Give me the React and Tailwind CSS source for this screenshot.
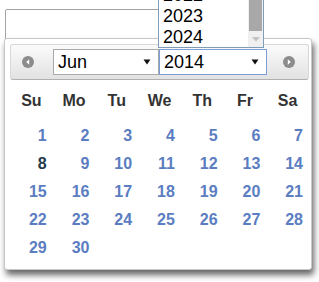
import React from 'react'

const DAYS = ['Su', 'Mo', 'Tu', 'We', 'Th', 'Fr', 'Sa']

// juin 2014 : commence un dimanche
const WEEKS = [
  [1, 2, 3, 4, 5, 6, 7],
  [8, 9, 10, 11, 12, 13, 14],
  [15, 16, 17, 18, 19, 20, 21],
  [22, 23, 24, 25, 26, 27, 28],
  [29, 30, null, null, null, null, null],
]

function Arrow() {
  return (
    <svg width="8" height="6" viewBox="0 0 8 6" className="block">
      <path d="M0.5 0.5 L7.5 0.5 L4 5.5 Z" fill="#111" />
    </svg>
  )
}

function NavIcon({ dir }) {
  return (
    <svg width="12" height="12" viewBox="0 0 12 12" className="block">
      <circle cx="6" cy="6" r="6" fill="#8c8c8c" />
      {dir === 'prev'
        ? <path d="M7.2 3.2 L4.2 6 L7.2 8.8 Z" fill="#fff" />
        : <path d="M4.8 3.2 L7.8 6 L4.8 8.8 Z" fill="#fff" />}
    </svg>
  )
}

function Select({ value, focused, className }) {
  return (
    <div className={`flex h-[26px] items-center justify-between bg-white pl-[4px] pr-[7px] text-[18px] text-black ${focused ? 'border border-[#7b9ed9]' : 'border border-[#a9a9a9]'} ${className}`}>
      <span className="leading-none">{value}</span>
      <Arrow />
    </div>
  )
}

export default function App() {
  return (
    <div className="relative h-[282px] w-[319px] overflow-hidden bg-white font-['Liberation_Sans',Arial,sans-serif]">
      <div className="pl-[5px] pt-[9px]">
        <div className="h-[31px] w-[200px] rounded-[2px] border border-[#a3a3a3] bg-white" />
      </div>

      {/* popup du calendrier */}
      <div className="absolute left-[4px] top-[38px] h-[232px] w-[308px] rounded-[3px] border border-[#c8c8c8] bg-white pl-[5px] pt-[5px] shadow-[2px_5px_6px_rgba(0,0,0,0.6)]">
        <div className="flex h-[36px] w-[299px] items-center rounded-[3px] border border-[#d8d8d8] border-b-[#b0b0b0] bg-gradient-to-b from-[#fbfbfb] to-[#e2e2e2]">
          <div className="ml-[11px] mr-[19px]"><NavIcon dir="prev" /></div>
          <Select value="Jun" className="w-[106px]" />
          <Select value="2014" focused className="w-[108px]" />
          <div className="ml-auto mr-[13px]"><NavIcon dir="next" /></div>
        </div>

        <div className="grid w-[299px] grid-cols-7">
          {DAYS.map((d) => (
            <div key={d} className="mt-[7px] flex h-[28px] items-center justify-center text-[16px] font-bold text-[#333]">{d}</div>
          ))}
        </div>
        <div className="mt-[7px] grid w-[299px] grid-cols-7">
          {WEEKS.flat().map((n, i) => (
            <div key={i} className={`flex h-[28px] items-center justify-end pr-[6px] text-[16px] font-bold ${n === 8 ? 'text-[#24394a]' : 'text-[#5b7dc1]'}`}>
              {n}
            </div>
          ))}
        </div>
      </div>

      {/* liste déroulante des années */}
      <div className="absolute left-[158px] top-[-16px] flex h-[64px] w-[106px] overflow-hidden border border-[#7f9db9] bg-white">
        <div className="flex-1 pl-[4px] pt-0 text-[18px] leading-[21px] text-black">
          <div>2022</div>
          <div>2023</div>
          <div>2024</div>
        </div>
        <div className="flex w-[15px] flex-col bg-[#f0f0f0]">
          <div className="mx-[1px] h-[46px] bg-[#a8a8a8]" />
          <div className="flex flex-1 items-start justify-center pt-[6px]">
            <svg width="8" height="5" viewBox="0 0 8 5" className="block">
              <path d="M0 0 L8 0 L4 4.5 Z" fill="#c2c2c2" />
            </svg>
          </div>
        </div>
      </div>
    </div>
  )
}
